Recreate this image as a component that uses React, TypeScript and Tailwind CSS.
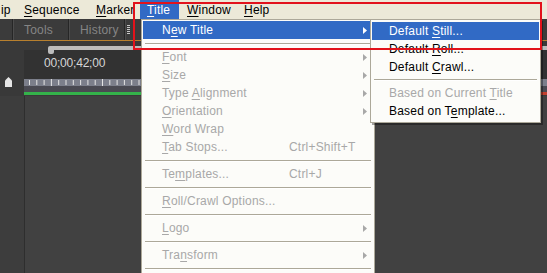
import React from "react";

const Arrow = ({ color }: { color: string }) => (
  <svg width="4" height="7" viewBox="0 0 4 7" className="shrink-0">
    <path d="M0 0 L4 3.5 L0 7 Z" fill={color} />
  </svg>
);

type Item = {
  label: React.ReactNode;
  shortcut?: string;
  arrow?: boolean;
  disabled?: boolean;
  active?: boolean;
};

const U = ({ children }: { children: React.ReactNode }) => <span className="underline underline-offset-[2px]">{children}</span>;

const MenuRow = ({ item }: { item: Item }) => {
  const text = item.active ? "text-white" : item.disabled ? "text-[#a8a8a8]" : "text-black";
  return (
    <div className={`h-[18px] flex items-center pl-[19px] pr-[6px] ${item.active ? "bg-[#316ac5]" : ""} ${text}`}>
      <span className="w-[127px] whitespace-pre">{item.label}</span>
      <span className="flex-1 whitespace-pre">{item.shortcut}</span>
      {item.arrow && <Arrow color={item.active ? "#ffffff" : item.disabled ? "#a8a8a8" : "#000000"} />}
    </div>
  );
};

const Sep = ({ h = "h-[9px]" }: { h?: string }) => (
  <div className={`${h} flex flex-col justify-center px-[2px]`}>
    <div className="h-px bg-[#aca899]" />
    <div className="h-px bg-white" />
  </div>
);

const SubRow = ({ label, active, disabled }: { label: React.ReactNode; active?: boolean; disabled?: boolean }) => (
  <div
    className={`h-[18px] flex items-center pl-[17px] ${
      active ? "bg-[#316ac5] text-white" : disabled ? "text-[#a8a8a8]" : "text-black"
    }`}
  >
    <span className="whitespace-pre">{label}</span>
  </div>
);

export default function App() {
  const ticks = Array.from({ length: 75 }, (_, i) => i);
  return (
    <div className="relative w-[547px] h-[273px] overflow-hidden bg-[#404040] font-['Liberation_Sans',Arial,sans-serif] text-[12px] tracking-[0.2px] leading-none">
      {/* Menu bar */}
      <div className="h-[19px] bg-[#ece9d8] flex items-stretch text-black">
        <div className="ml-[1px] w-[23px] flex items-center">ip</div>
        <div className="w-[72px] flex items-center">
          <span>
            <U>S</U>equence
          </span>
        </div>
        <div className="w-[44px] flex items-center">
          <span>
            <U>M</U>arker
          </span>
        </div>
        <div className="w-[39px] pl-[7px] flex items-center bg-[#316ac5] text-white">
          <span>
            <U>T</U>itle
          </span>
        </div>
        <div className="w-[58px] pl-[8px] flex items-center">
          <span>
            <U>W</U>indow
          </span>
        </div>
        <div className="pl-[7px] flex items-center">
          <span>
            <U>H</U>elp
          </span>
        </div>
      </div>

      {/* Tab row */}
      <div className="h-[22px] bg-[#3b3b3b] border-b border-[#b8802e] flex items-stretch text-[#858585]">
        <div className="w-[12px]" />
        <div className="w-[2px] flex">
          <div className="w-px bg-[#262626]" />
          <div className="w-px bg-[#4c4c4c]" />
        </div>
        <div className="w-[54px] pl-[10px] flex items-center">Tools</div>
        <div className="w-[2px] flex">
          <div className="w-px bg-[#262626]" />
          <div className="w-px bg-[#4c4c4c]" />
        </div>
        <div className="w-[54px] pl-[10px] flex items-center">History</div>
        <div className="w-[2px] flex">
          <div className="w-px bg-[#262626]" />
          <div className="w-px bg-[#4c4c4c]" />
        </div>
        <div className="ml-[1px] flex items-center">
          <div className="w-[3px] h-[9px] bg-[repeating-linear-gradient(to_bottom,#c8c8c8_0px,#c8c8c8_1px,transparent_1px,transparent_2px)]" />
        </div>
      </div>

      {/* Timeline */}
      <div className="h-[55px] flex bg-[#393939]">
        <div className="w-[24px] flex flex-col">
          <div className="h-[36px]" />
          <div className="flex justify-start pl-[5px]">
            <svg width="7" height="10" viewBox="0 0 7 10">
              <path d="M0 3.5 L3.5 0 L7 3.5 L7 10 L0 10 Z" fill="#e6e6e6" />
            </svg>
          </div>
        </div>
        <div className="flex-1 flex flex-col">
          <div className="h-[5px]" />
          <div className="h-[4px] flex">
            <div className="w-[24px]" />
            <div className="flex-1 bg-[#bcbcbc] rounded-tl-[2px]" />
          </div>
          <div className="h-[29px] bg-[#323232] flex items-center pl-[20px] text-[#d6d6d6] relative">
            <div className="absolute left-[24px] top-0 w-[6px] h-[4px] bg-[#bcbcbc] rounded-b-[2px]" />
            <span className="mt-[-3px] tracking-[-0.2px]">00;00;42;00</span>
          </div>
          <div className="h-[7px] bg-[#7c7f8b] relative">
            <svg width="523" height="7" className="absolute left-0 top-0">
              {ticks.map((i) => (
                <rect key={i} x={5 + i * 7.3} y={i % 7 === 3 ? 0 : 1} width="1" height={i % 7 === 3 ? 7 : 5} fill="#e4e4e4" />
              ))}
            </svg>
          </div>
          <div className="h-[6px] bg-[#4a4a52]" />
          <div className="h-[3px] flex">
            <div className="w-[496px] bg-[#34b24a]" />
            <div className="flex-1 bg-[#c2402e]" />
          </div>
        </div>
      </div>

      {/* Body */}
      <div className="h-[177px] flex">
        <div className="w-[24px] bg-[#3d3d3d]" />
        <div className="w-px bg-[#2e2e2e]" />
        <div className="flex-1 bg-[#414141]" />
      </div>

      {/* Title menu */}
      <div className="absolute left-[141px] top-[19px] w-[234px] h-[270px] bg-[#fcfcf9] border border-[#aca899] px-[1px] pt-[1px]">
        <MenuRow item={{ label: <>N<U>e</U>w Title</>, arrow: true, active: true }} />
        <Sep />
        <MenuRow item={{ label: <><U>F</U>ont</>, arrow: true, disabled: true }} />
        <MenuRow item={{ label: <><U>S</U>ize</>, arrow: true, disabled: true }} />
        <MenuRow item={{ label: <>Type <U>A</U>lignment</>, arrow: true, disabled: true }} />
        <MenuRow item={{ label: <><U>O</U>rientation</>, arrow: true, disabled: true }} />
        <MenuRow item={{ label: <><U>W</U>ord Wrap</>, disabled: true }} />
        <MenuRow item={{ label: <><U>T</U>ab Stops...</>, shortcut: "Ctrl+Shift+T", disabled: true }} />
        <Sep />
        <MenuRow item={{ label: <>Te<U>m</U>plates...</>, shortcut: "Ctrl+J", disabled: true }} />
        <Sep />
        <MenuRow item={{ label: <><U>R</U>oll/Crawl Options...</>, disabled: true }} />
        <Sep />
        <MenuRow item={{ label: <><U>L</U>ogo</>, arrow: true, disabled: true }} />
        <Sep />
        <MenuRow item={{ label: <>Tra<U>n</U>sform</>, arrow: true, disabled: true }} />
        <Sep />
      </div>

      {/* New Title submenu */}
      <div className="absolute left-[370px] top-[19px] w-[171px] bg-[#fcfcf9] border border-[#aca899] px-[1px] pt-[2px] pb-[2px] shadow-[2px_2px_0_rgba(0,0,0,0.35)]">
        <SubRow active label={<>Default <U>S</U>till...</>} />
        <SubRow label={<>Default <U>R</U>oll...</>} />
        <SubRow label={<>Default <U>C</U>rawl...</>} />
        <Sep h="h-[8px]" />
        <SubRow disabled label={<>Based on Current <U>T</U>itle</>} />
        <SubRow label={<>Based on T<U>e</U>mplate...</>} />
      </div>

      {/* Red annotation box */}
      <div className="absolute left-[133px] top-[2px] w-[409px] h-[48px] border-2 border-[#e2121b]" />
    </div>
  );
}
